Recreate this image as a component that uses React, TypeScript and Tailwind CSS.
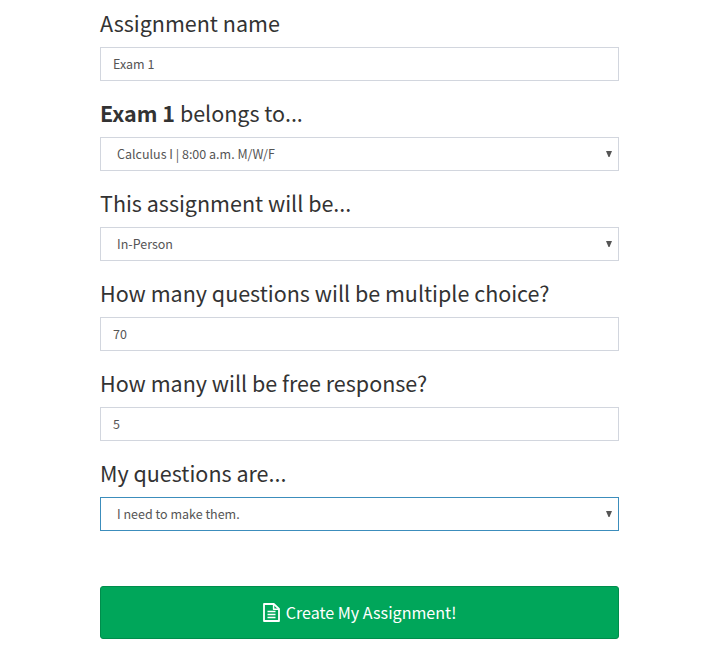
import type { ReactNode } from 'react';
import clsx from 'clsx';

const FIELD =
  'block w-full h-[34px] rounded-none border bg-white text-[12.5px] leading-5 text-[#555] outline-none';

function Field({ label, children }: { label: ReactNode; children: ReactNode }) {
  return (
    <label className="block">
      <span className="mb-[11px] block h-[26px] whitespace-nowrap text-[21.5px] leading-[26px] text-[#333]">
        {label}
      </span>
      {children}
    </label>
  );
}

function TextInput({ value }: { value: string }) {
  return <input type="text" defaultValue={value} className={clsx(FIELD, 'border-[#d2d6de] px-3 pb-0.5')} />;
}

function Select({ value, active = false }: { value: string; active?: boolean }) {
  return (
    <span className="relative block">
      <select
        defaultValue={value}
        className={clsx(FIELD, 'appearance-none px-4', active ? 'border-[#3c8dbc]' : 'border-[#d2d6de]')}
      >
        <option>{value}</option>
      </select>
      <svg
        className="pointer-events-none absolute top-3.5 right-[7px] h-[6px] w-[6px]"
        viewBox="0 0 6 6"
        fill="#555"
      >
        <path d="M0 0h6L3.5 6h-1z" />
      </svg>
    </span>
  );
}

function FileTextIcon() {
  return (
    <svg
      className="h-[19px] w-[17px]"
      viewBox="0 0 17 19"
      fill="none"
      stroke="currentColor"
      strokeWidth="1.8"
      strokeLinejoin="round"
    >
      <path d="M1 1h9.8l5.2 4.9v12.1H1z" />
      <path d="M10.6 1v5.2h5.2" strokeWidth="1.5" />
      <path d="M4.5 8.5h8M4.5 11.5h8M4.5 14.5h8" strokeWidth="1.3" />
    </svg>
  );
}

export default function App() {
  return (
    <main className="h-[656px] overflow-hidden bg-white pt-2.5 pl-[100px] font-['Source_Sans_Pro','Noto_Sans_CJK_SC',sans-serif]">
      <form className="w-[519px]" onSubmit={(e) => e.preventDefault()}>
        <div className="flex flex-col gap-[19px]">
          <Field label="Assignment name">
            <TextInput value="Exam 1" />
          </Field>
          <Field
            label={
              <>
                <b className="font-bold">Exam 1</b> belongs to...
              </>
            }
          >
            <Select value="Calculus I | 8:00 a.m. M/W/F" />
          </Field>
          <Field label="This assignment will be...">
            <Select value="In-Person" />
          </Field>
          <Field label="How many questions will be multiple choice?">
            <TextInput value="70" />
          </Field>
          <Field label="How many will be free response?">
            <TextInput value="5" />
          </Field>
          <Field label="My questions are...">
            <Select value="I need to make them." active />
          </Field>
        </div>

        <button
          type="submit"
          className="mt-[55px] flex h-[53px] w-full items-center justify-center gap-1.5 rounded-[3px] border border-[#008d4c] bg-[#00a65a] text-[16.1px] leading-6 text-white"
        >
          <FileTextIcon />
          <span className="pb-0.5">Create My Assignment!</span>
        </button>
      </form>
    </main>
  );
}
